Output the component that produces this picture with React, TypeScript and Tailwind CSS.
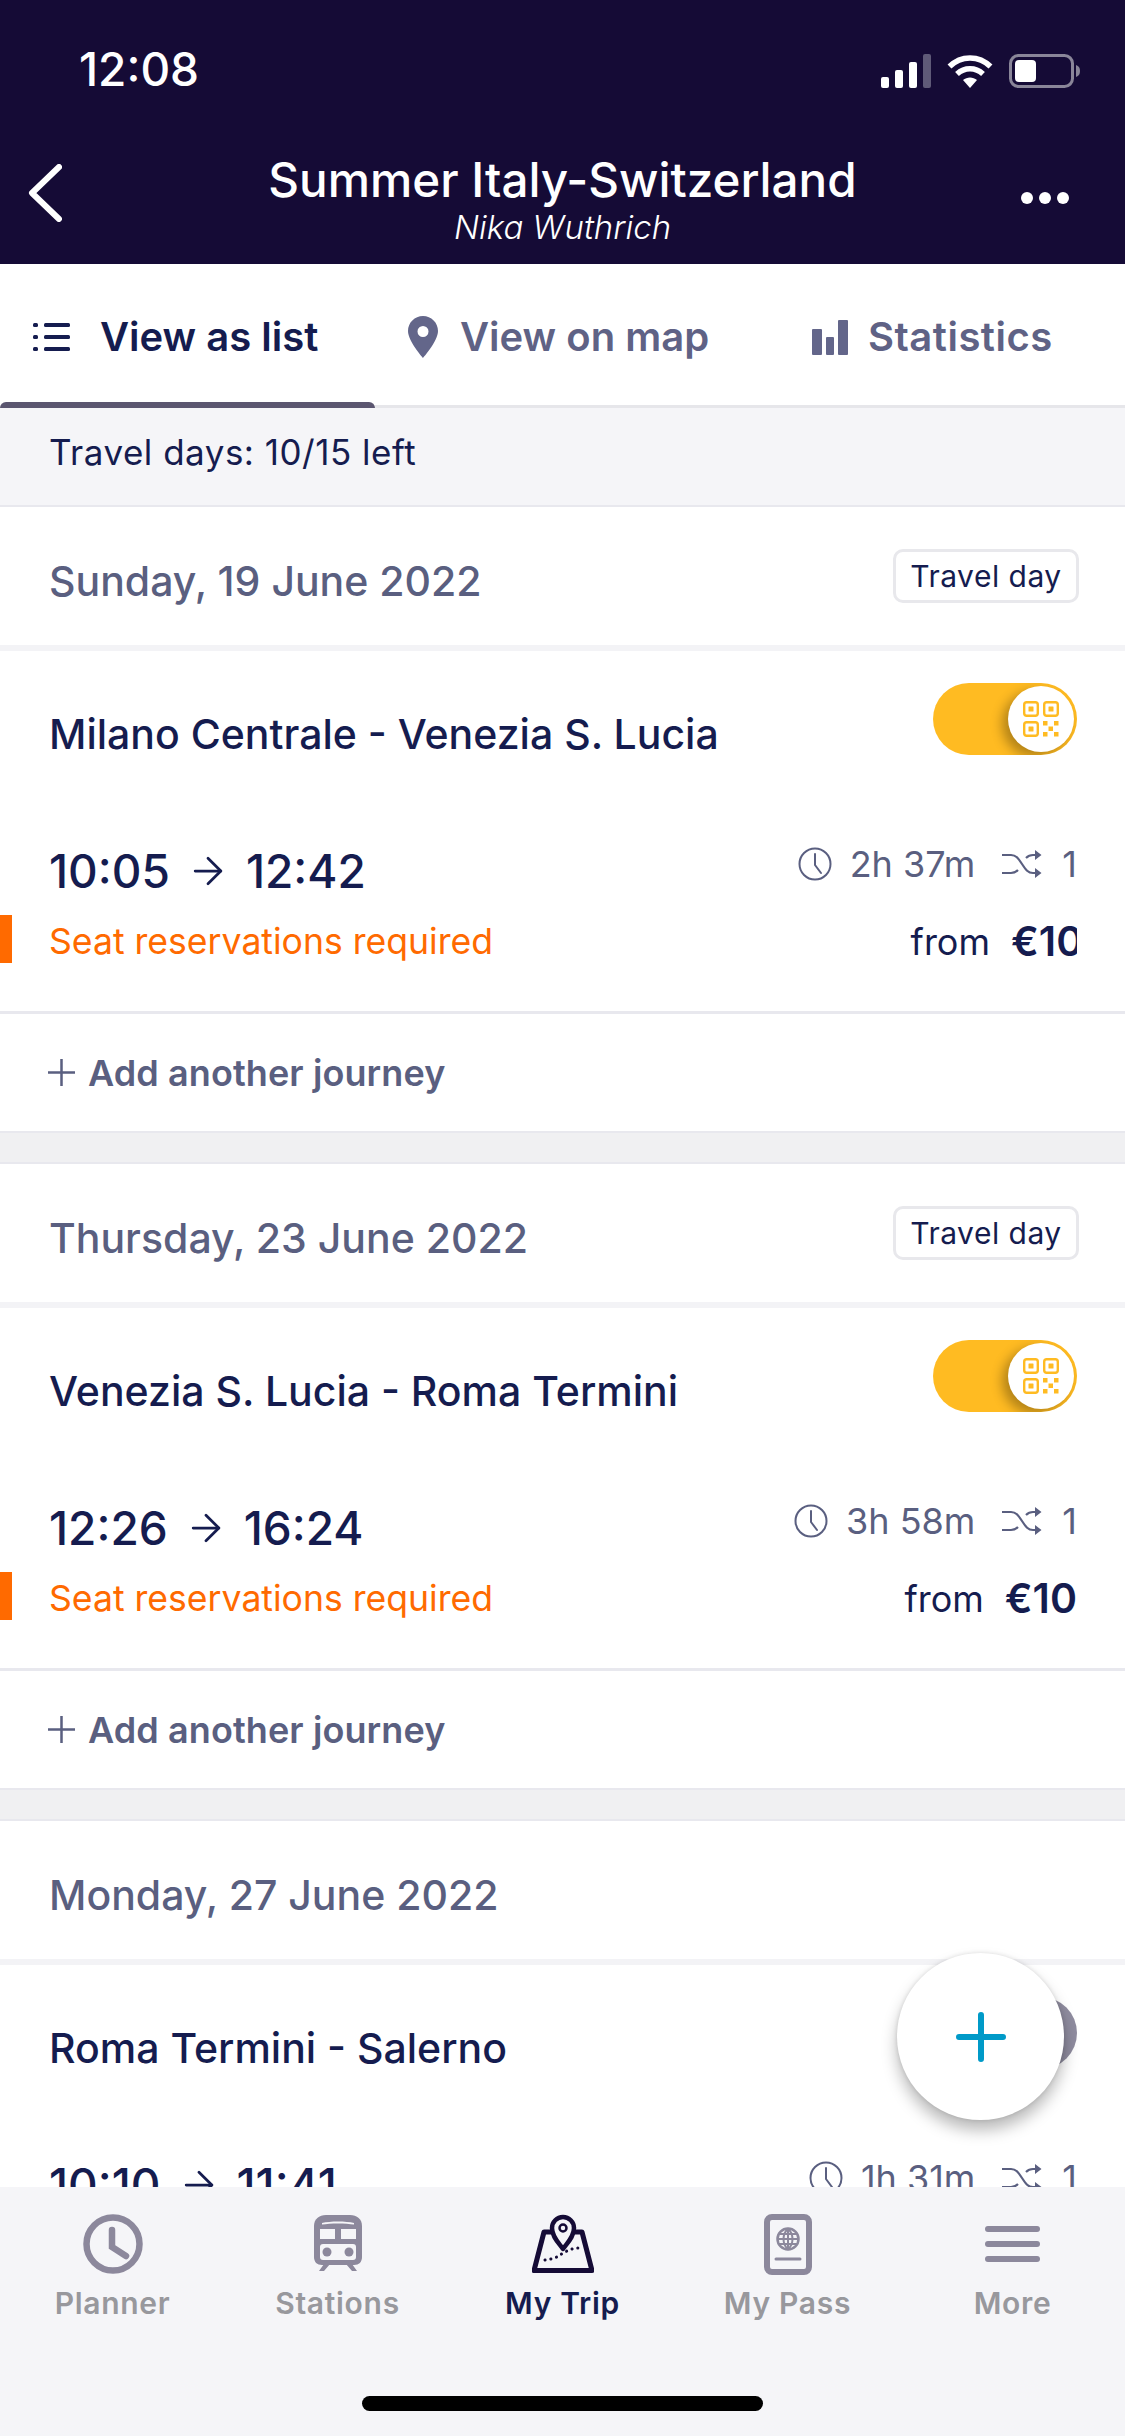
import { ArrowRight } from 'lucide-react'

const INK = '#151c4f'

function Signal() {
  return (
    <svg width="50" height="34" viewBox="0 0 50 34">
      <rect x="0" y="23" width="8" height="11" rx="2" fill="#fff" />
      <rect x="14" y="16" width="8" height="18" rx="2" fill="#fff" />
      <rect x="28" y="8" width="8" height="26" rx="2" fill="#fff" />
      <rect x="42" y="0" width="8" height="34" rx="2" fill="#5f5a78" />
    </svg>
  )
}

function Wifi() {
  return (
    <svg width="46" height="34" viewBox="0 0 46 34" fill="none" stroke="#fff" strokeWidth="5.5">
      <path d="M2.5 12.5C14 1 32 1 43.500 12.500" />
      <path d="M10 20c7.500-7 18.500-7 26 0" />
      <path d="M23 34l-7-8c4-3.500 10-3.500 14 0z" fill="#fff" stroke="none" />
    </svg>
  )
}

function Battery() {
  return (
    <svg width="72" height="34" viewBox="0 0 72 34">
      <rect x="1.500" y="1.500" width="62" height="31" rx="8" fill="none" stroke="#8a8699" strokeWidth="3" />
      <rect x="6" y="6" width="21" height="22" rx="4" fill="#fff" />
      <path d="M67 11c3 1 4 3 4 6s-1 5-4 6z" fill="#8a8699" />
    </svg>
  )
}

function ListIcon() {
  return (
    <svg width="37" height="28" viewBox="0 0 37 28" fill={INK}>
      <rect x="0" y="0" width="5" height="4" rx="1.500" />
      <rect x="11" y="0" width="26" height="4" rx="1.500" />
      <rect x="0" y="12" width="5" height="4" rx="1.500" />
      <rect x="11" y="12" width="26" height="4" rx="1.500" />
      <rect x="0" y="24" width="5" height="4" rx="1.500" />
      <rect x="11" y="24" width="26" height="4" rx="1.500" />
    </svg>
  )
}

function PinIcon() {
  return (
    <svg width="30" height="42" viewBox="0 0 30 42">
      <path
        fillRule="evenodd"
        d="M15 0C6.700 0 0 6.700 0 15c0 10 15 27 15 27s15-17 15-27C30 6.700 23.300 0 15 0zm0 10a5.500 5.500 0 1 1 0 11 5.500 5.500 0 0 1 0-11z"
        fill="#63668a"
      />
    </svg>
  )
}

function BarsIcon() {
  return (
    <svg width="36" height="35" viewBox="0 0 36 35" fill="#63668a">
      <rect x="0" y="9" width="10" height="26" rx="1" />
      <rect x="14" y="17" width="8" height="18" rx="1" />
      <rect x="26" y="0" width="10" height="35" rx="1" />
    </svg>
  )
}

function QrIcon() {
  const box = (x: number, y: number) => (
    <g key={`${x}-${y}`}>
      <rect x={x + 1.200} y={y + 1.200} width="13.600" height="13.600" rx="2.500" fill="none" stroke="#ffbb22" strokeWidth="2.400" />
      <rect x={x + 5.500} y={y + 5.500} width="5" height="5" rx="0.500" fill="#ffbb22" />
    </g>
  )
  return (
    <svg width="36" height="36" viewBox="0 0 36 36">
      {box(0, 0)}
      {box(20, 0)}
      {box(0, 20)}
      <g fill="#ffbb22">
        <rect x="20" y="20" width="4.500" height="4.500" />
        <rect x="31" y="20" width="4.500" height="4.500" />
        <rect x="25.500" y="25.500" width="4.500" height="4.500" />
        <rect x="20" y="31" width="4.500" height="4.500" />
        <rect x="31" y="31" width="4.500" height="4.500" />
      </g>
    </svg>
  )
}

function ClockSmall() {
  return (
    <svg width="34" height="34" viewBox="0 0 34 34" fill="none" stroke="#5a5f80" strokeWidth="2" strokeLinecap="round">
      <circle cx="17" cy="17" r="15.500" />
      <path d="M17 7v11l6 8" />
    </svg>
  )
}

function ShuffleIcon() {
  return (
    <svg width="40" height="28" viewBox="0 0 40 28" fill="none" stroke="#5a5f80" strokeWidth="2.200">
      <path d="M0 5h9c5 0 7 3 11 9s6 9 11 9h4" />
      <path d="M0 23h9c3 0 5-1 7-3M24 8c2-2 4-3 7-3h4" />
      <path d="M33 0l6.500 5-6.500 5zM33 18l6.500 5-6.500 5z" fill="#5a5f80" stroke="none" />
    </svg>
  )
}

function PlusSmall() {
  return (
    <svg width="27" height="27" viewBox="0 0 27 27" stroke="#5a5f80" strokeWidth="2.500">
      <path d="M13.500 0v27M0 13.500h27" />
    </svg>
  )
}

function JourneySection({ date, badge, route, from, to, duration, price, clipPrice, active, seats }: {
  date: string
  badge?: boolean
  route: string
  from: string
  to: string
  duration: string
  price?: string
  clipPrice?: boolean
  active?: boolean
  seats?: boolean
}) {
  return (
    <section className="bg-white">
      <div className="h-[2px] bg-[#e8e8ee]" />
      <div className="h-[138px] flex items-center justify-between pl-[49px] pr-[46px]">
        <div className="mt-[12px] text-[41px] font-medium text-[#5a5f80]">{date}</div>
        {badge && (
          <div className="h-[54px] w-[186px] flex items-center justify-center rounded-[10px] border-[3px] border-[#e8e8ec] text-[30px] tracking-[0.5px] text-[#151c4f]">
            Travel day
          </div>
        )}
      </div>
      <div className="h-[6px] bg-[#f3f3f6]" />

      <div className="h-[360px] pt-[32px]">
        <div className="flex items-start justify-between pl-[49px] pr-[48px]">
          <h3 className="mt-[25px] text-[41px] leading-[52px] font-medium text-[#151c4f]">{route}</h3>
          <div className={`h-[72px] w-[144px] flex items-center pr-[3px] pl-[3px] rounded-full overflow-hidden ${active ? 'justify-end bg-[#ffbb22]' : 'justify-start bg-[#8f8c9f]'}`}>
            <div className="h-[66px] w-[66px] flex items-center justify-center rounded-full bg-white shadow-[-6px_5px_12px_rgba(0,0,0,0.3)]">
              {active && <QrIcon />}
            </div>
          </div>
        </div>

        <div className="mt-[81px] h-[60px] flex items-center justify-between pl-[49px] pr-[48px]">
          <div className="flex items-center text-[46px] font-medium text-[#151c4f]">
            <span>{from}</span>
            <ArrowRight size={44} strokeWidth={1.5} className="mx-[16px]" />
            <span>{to}</span>
          </div>
          <div className="mb-[14px] flex items-center text-[36px] text-[#5a5f80]">
            <ClockSmall />
            <span className="ml-[18px]">{duration}</span>
            <span className="ml-[27px]"><ShuffleIcon /></span>
            <span className="ml-[20px]">1</span>
          </div>
        </div>

        {seats && (
          <div className="mt-[14px] h-[48px] flex items-start pr-[48px]">
            <div className="h-[48px] w-[12px] bg-[#ff6a00]" />
            <span className="ml-[37px] text-[35.600px] text-[#ff6a00]">Seat reservations required</span>
            <div className="ml-auto -mt-[4px] flex items-center text-[#151c4f]">
              <span className="text-[36px]">from</span>
              <span className={`overflow-hidden text-[41px] font-semibold ${clipPrice ? 'ml-[21px] w-[66px]' : 'ml-[21px]'}`}>{price}</span>
            </div>
          </div>
        )}
      </div>

      <div className="h-[3px] bg-[#e8e8ee]" />
      <div className="h-[117px] flex items-center pl-[48px]">
        <PlusSmall />
        <span className="ml-[13px] text-[36px] tracking-[0.1px] font-semibold text-[#5a5f80]">Add another journey</span>
      </div>
      <div className="h-[2px] bg-[#e8e8ee]" />
      <div className="h-[29px] bg-[#f0f0f2]" />
    </section>
  )
}

const tabColor = '#8c889c'

function NavItem({ label, active, children }: { label: string; active?: boolean; children: React.ReactNode }) {
  return (
    <div className="flex flex-col items-center">
      <div className="h-[62px] flex items-center justify-center">{children}</div>
      <span className={`mt-[10px] text-[30px] tracking-[0.7px] leading-[36px] font-semibold ${active ? 'text-[#151c4f]' : 'text-[#98989d]'}`}>{label}</span>
    </div>
  )
}

export default function App() {
  return (
    <div className="h-[2436px] w-[1125px] relative flex flex-col overflow-hidden bg-white font-['Inter',sans-serif]">
      <header className="h-[264px] shrink-0 bg-[#150b36] text-white">
        <div className="h-[68px] pt-[35px] flex items-center justify-between pl-[79px] pr-[44px] box-content">
          <span className="text-[46px] font-medium">12:08</span>
          <div className="mt-[4px] flex items-center gap-[16px]">
            <Signal />
            <Wifi />
            <Battery />
          </div>
        </div>
        <div className="mt-[47px] grid grid-cols-[1fr_auto_1fr] items-start pl-[28px] pr-[56px]">
          <svg width="34" height="58" viewBox="0 0 34 58" fill="none" stroke="#fff" strokeWidth="6" strokeLinecap="round" strokeLinejoin="round" className="mt-[14px]">
            <path d="M31 3L4 29l27 26" />
          </svg>
          <div className="flex flex-col items-center translate-x-[14px]">
            <h1 className="text-[47.600px] leading-[60px] font-medium">Summer Italy-Switzerland</h1>
            <span className="-mt-[3px] text-[33px] leading-[40px] italic font-light">Nika Wuthrich</span>
          </div>
          <div className="mt-[42px] flex justify-end gap-[6px]">
            <span className="h-[12px] w-[12px] rounded-full bg-white" />
            <span className="h-[12px] w-[12px] rounded-full bg-white" />
            <span className="h-[12px] w-[12px] rounded-full bg-white" />
          </div>
        </div>
      </header>

      <nav className="h-[144px] shrink-0 flex flex-col">
        <div className="h-[138px] pt-[8px] grid grid-cols-3 text-[40px] font-semibold">
          <div className="flex items-center pl-[33px] gap-[30px] text-[#151c4f]">
            <ListIcon />
            <span>View as list</span>
          </div>
          <div className="flex items-center pl-[33px] gap-[22px] text-[#5f6285]">
            <PinIcon />
            <span>View on map</span>
          </div>
          <div className="flex items-center pl-[62px] gap-[20px] text-[#5f6285]">
            <BarsIcon />
            <span className="tracking-[0.5px]">Statistics</span>
          </div>
        </div>
        <div className="h-[6px] flex items-end bg-white">
          <div className="h-[6px] w-[375px] rounded-t-[6px] bg-[#5b5670]" />
          <div className="h-[3px] flex-1 bg-[#e6e6ea]" />
        </div>
      </nav>

      <div className="h-[97px] shrink-0 flex items-center pl-[49px] pb-[8px] bg-[#f5f5f8] text-[35px] tracking-[0.5px] text-[#151c4f]">
        Travel days: 10/15 left
      </div>

      <main className="flex-1 min-h-0 overflow-hidden">
        <JourneySection date="Sunday, 19 June 2022" badge route="Milano Centrale - Venezia S. Lucia" from="10:05" to="12:42" duration="2h 37m" price="€10" clipPrice active seats />
        <JourneySection date="Thursday, 23 June 2022" badge route="Venezia S. Lucia - Roma Termini" from="12:26" to="16:24" duration="3h 58m" price="€10" active seats />
        <JourneySection date="Monday, 27 June 2022" route="Roma Termini - Salerno" from="10:10" to="11:41" duration="1h 31m" />
      </main>

      <footer className="h-[249px] shrink-0 bg-[#f5f5f8]">
        <div className="grid grid-cols-5 pt-[26px]">
          <NavItem label="Planner">
            <svg width="60" height="60" viewBox="0 0 60 60" fill="none" stroke={tabColor} strokeWidth="6.500" strokeLinecap="round">
              <circle cx="30" cy="30" r="26.500" />
              <path d="M29 16v17l14 9" />
            </svg>
          </NavItem>
          <NavItem label="Stations">
            <svg width="48" height="60" viewBox="0 0 48 60" fill={tabColor}>
              <path d="M12 1h24c7 0 12 4 12 11v31c0 5-3 8-8 8H8c-5 0-8-3-8-8V12C0 5 5 1 12 1z" />
              <path d="M8 9c8-2 24-2 32 0v1.500c-8-1.500-24-1.500-32 0z" fill="#f5f5f8" />
              <rect x="6" y="15" width="15" height="10" fill="#f5f5f8" />
              <rect x="27" y="15" width="15" height="10" fill="#f5f5f8" />
              <rect x="6" y="30" width="36" height="16" rx="3" fill="#f5f5f8" />
              <circle cx="13" cy="38" r="4.500" />
              <circle cx="35" cy="38" r="4.500" />
              <path d="M10 50h6l-6 7H5zM32 50h6l5 7h-5z" />
            </svg>
          </NavItem>
          <NavItem label="My Trip" active>
            <svg width="62" height="60" viewBox="0 0 62 60" fill="none" stroke="#150b36" strokeWidth="4.500" strokeLinejoin="round">
              <path d="M19 18h-7L2 56.500h58L50 18h-7" strokeWidth="5" />
              <path d="M31 35c-4-6-11-12-11-21a11 11 0 1 1 22 0c0 9-7 15-11 21z" fill="#f5f5f8" />
              <circle cx="31" cy="14" r="3.500" strokeWidth="2.500" />
              <path d="M13 46l6-1 6-2 6-4 6-3 6-2 6 0" strokeWidth="3" strokeDasharray="0.100 5.800" strokeLinecap="round" />
            </svg>
          </NavItem>
          <NavItem label="My Pass">
            <svg width="48" height="61" viewBox="0 0 48 61" fill="none" stroke={tabColor}>
              <rect x="3" y="3" width="42" height="55" rx="5" strokeWidth="6" />
              <circle cx="24" cy="25" r="10.500" strokeWidth="2.500" />
              <path d="M24 14.500c-6 6-6 15 0 21M24 14.500c6 6 6 15 0 21M13.500 25h21M15 20h18M15 30h18M24 14.500v21" strokeWidth="2" />
              <path d="M12 45h24" strokeWidth="3" strokeLinecap="round" />
            </svg>
          </NavItem>
          <NavItem label="More">
            <svg width="55" height="36" viewBox="0 0 55 36" fill={tabColor}>
              <rect x="0" y="0" width="55" height="6" rx="3" />
              <rect x="0" y="15" width="55" height="6" rx="3" />
              <rect x="0" y="30" width="55" height="6" rx="3" />
            </svg>
          </NavItem>
        </div>
        <div className="mt-[75px] mx-auto h-[15px] w-[401px] rounded-full bg-black" />
      </footer>

      <button className="absolute left-[897px] top-[1953px] h-[167px] w-[167px] flex items-center justify-center rounded-full bg-white shadow-[0_10px_16px_rgba(0,0,0,0.28),0_0_4px_rgba(0,0,0,0.12)]">
        <svg width="50" height="50" viewBox="0 0 50 50" stroke="#009ac8" strokeWidth="6" strokeLinecap="round">
          <path d="M25 3v44M3 25h44" />
        </svg>
      </button>
    </div>
  )
}
